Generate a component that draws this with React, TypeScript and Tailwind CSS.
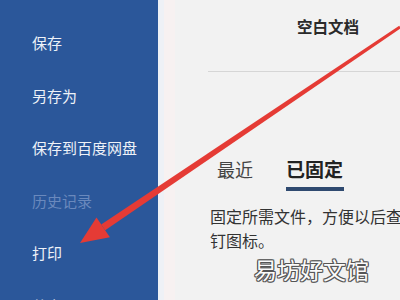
import React from "react";

const menu = [
  { label: "保存", dim: false },
  { label: "另存为", dim: false },
  { label: "保存到百度网盘", dim: false },
  { label: "历史记录", dim: true },
  { label: "打印", dim: false },
  { label: "共享", dim: false },
];

export default function App() {
  return (
    <div
      className="relative flex h-[300px] w-[400px] overflow-hidden bg-[#f2f2f2]"
      style={{ fontFamily: '"Noto Sans CJK SC", "Noto Sans", sans-serif' }}
    >
      {/* sidebar */}
      <div className="w-[158px] shrink-0 bg-[#2b579a] pl-[32px] pt-[17px]">
        {menu.map((m) => (
          <div
            key={m.label}
            className={`flex h-[52.5px] items-center whitespace-nowrap text-[15px] ${
              m.dim ? "text-[#6a89bd]" : "text-[#eef2f8]"
            }`}
          >
            {m.label}
          </div>
        ))}
      </div>

      <div className="w-[6px] shrink-0 bg-[#eef1f6]" />
      <div className="w-[11px] shrink-0 bg-[#f7f1f1]" />

      {/* main */}
      <div className="flex flex-1 flex-col pl-[33px]">
        <div className="pl-[89px] pt-[16px] text-[15.5px] font-bold leading-[20px] text-[#2a2a2a] whitespace-nowrap">
          空白文档
        </div>
        <div className="mt-[35px] h-px w-full bg-[#d6d6d6]" />

        <div className="mt-[86px] flex gap-[33px] pl-[9px]">
          <div className="text-[18px] leading-[22px] text-[#444]">最近</div>
          <div className="flex flex-col">
            <div className="text-[19px] font-bold leading-[22px] text-[#222]">已固定</div>
            <div className="mt-[7px] h-[4px] w-[58px] bg-[#2f4a70]" />
          </div>
        </div>

        <div className="mt-[13px] pl-[2px] text-[16px] leading-[24px] text-[#333]">
          <div className="whitespace-nowrap">固定所需文件，方便以后查找。将鼠标悬停在某个文件上方时，点击图</div>
          <div className="whitespace-nowrap">钉图标。</div>
        </div>

        <div className="mt-[2px] pl-[46px] text-[23px] leading-[30px] text-[#fbfbfb] whitespace-nowrap [text-shadow:1px_0_0_#555,-1px_0_0_#555,0_1px_0_#555,0_-1px_0_#555,1px_1px_0_#666,-1px_-1px_0_#666,1px_-1px_0_#666,-1px_1px_0_#666]">
          易坊好文馆
        </div>
      </div>

      {/* red arrow overlay */}
      <svg className="pointer-events-none absolute left-0 top-0" width="400" height="300" viewBox="0 0 400 300">
        <polygon points="400.8,28.2 399.2,25.8 101.2,224.4 105.2,230.2" fill="#e53b35" />
        <polygon points="80,243 96.5,217.4 109.9,237.2" fill="#e53b35" />
      </svg>
    </div>
  );
}
